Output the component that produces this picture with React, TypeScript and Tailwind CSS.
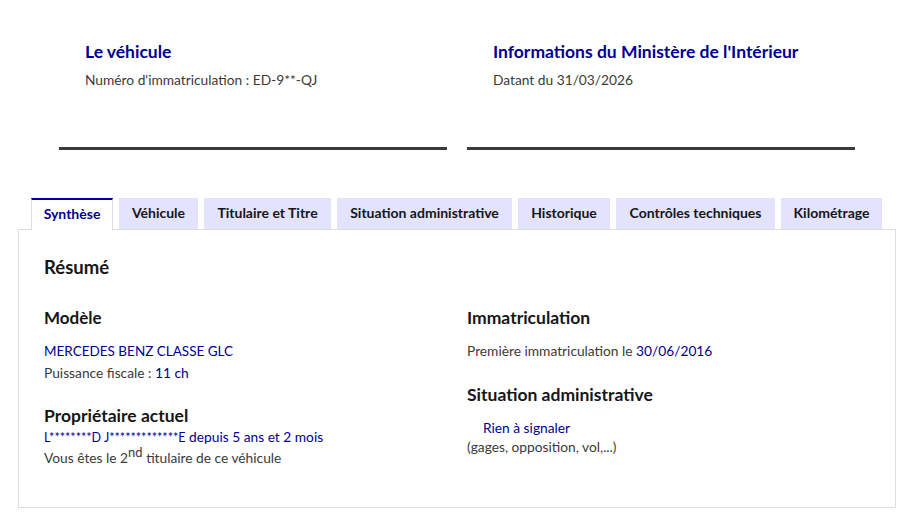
import React from 'react';

const tabs = [
  { label: 'Synthèse', w: 'w-[82px]' },
  { label: 'Véhicule', w: 'w-[79px]' },
  { label: 'Titulaire et Titre', w: 'w-[127px]' },
  { label: 'Situation administrative', w: 'w-[175px]' },
  { label: 'Historique', w: 'w-[92px]' },
  { label: 'Contrôles techniques', w: 'w-[159px]' },
  { label: 'Kilométrage', w: 'w-[101px]' },
];

function HeaderBlock({ title, subtitle }: { title: string; subtitle: string }) {
  return (
    <div className="h-[150px] border-b-[3px] border-[#3a3a3a] px-[26px] pt-[40px]">
      <h1 className="text-[17.5px] font-bold leading-6 text-[#000091]">{title}</h1>
      <p className="mt-[6px] text-[13.75px] leading-5 text-[#3a3a3a]">{subtitle}</p>
    </div>
  );
}

export default function App() {
  return (
    <div className="min-h-[514px] bg-white font-['Lato',sans-serif] text-[#3a3a3a]">
      {/* Header */}
      <div className="grid grid-cols-2 gap-5 px-[59px]">
        <HeaderBlock title="Le véhicule" subtitle="Numéro d'immatriculation : ED-9**-QJ" />
        <HeaderBlock title="Informations du Ministère de l'Intérieur" subtitle="Datant du 31/03/2026" />
      </div>

      {/* Tabs */}
      <div className="mx-[18px] mt-[48px]">
        <div className="relative z-10 flex gap-[6px] pl-[13px]">
          {tabs.map((t, i) =>
            i === 0 ? (
              <div
                key={t.label}
                className={`${t.w} flex h-[32px] items-center justify-center border-x border-t-2 border-x-[#dddddd] border-t-[#000091] bg-white pb-[3px] text-[14px] font-bold text-[#000091]`}
              >
                {t.label}
              </div>
            ) : (
              <div
                key={t.label}
                className={`${t.w} flex h-[31px] items-center justify-center bg-[#e3e3fd] pb-[2px] text-[14px] font-bold text-[#161616]`}
              >
                {t.label}
              </div>
            )
          )}
        </div>

        {/* Panel */}
        <div className="-mt-px border border-[#dddddd] px-[25px] pb-[39px] pt-[25px]">
          <h2 className="text-[18.5px] font-bold leading-6 text-[#161616]">Résumé</h2>

          <div className="mt-[27px] grid grid-cols-[423px_1fr]">
            <div>
              <h3 className="text-[17px] font-bold leading-6 text-[#161616]">Modèle</h3>
              <p className="mt-[10px] text-[13.5px] leading-[22px] text-[#000091]">MERCEDES BENZ CLASSE GLC</p>
              <p className="text-[13.75px] leading-[22px]">
                Puissance fiscale : <span className="text-[#000091]">11 ch</span>
              </p>

              <h3 className="mt-[21px] text-[17.5px] font-bold leading-[22px] text-[#161616]">Propriétaire actuel</h3>
              <p className="text-[13.75px] leading-5 text-[#000091]">
                <span className="text-[12.5px]">L********D J*************E</span> depuis 5 ans et 2 mois
              </p>
              <p className="h-5 text-[13.75px] leading-5">
                Vous êtes le 2<sup className="text-[13px] leading-none">nd</sup> titulaire de ce véhicule
              </p>
            </div>

            <div>
              <h3 className="text-[17.5px] font-bold leading-6 text-[#161616]">Immatriculation</h3>
              <p className="mt-[10px] text-[13.75px] leading-[22px]">
                Première immatriculation le <span className="text-[#000091]">30/06/2016</span>
              </p>

              <h3 className="mt-[21px] text-[17.5px] font-bold leading-6 text-[#161616]">Situation administrative</h3>
              <p className="mt-[11px] pl-4 text-[13.75px] leading-[19px] text-[#000091]">Rien à signaler</p>
              <p className="text-[13.75px] leading-[19px]">(gages, opposition, vol,...)</p>
            </div>
          </div>
        </div>
      </div>
    </div>
  );
}
